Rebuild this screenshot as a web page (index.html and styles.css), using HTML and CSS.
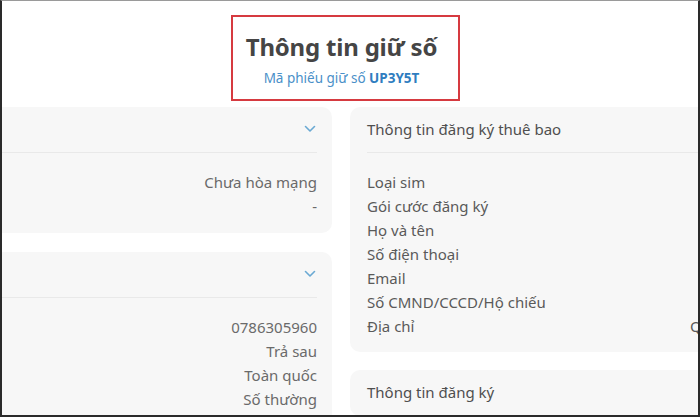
FILE: index.html
```html
<!DOCTYPE html>
<html lang="vi">
<head>
<meta charset="utf-8">
<title>Thông tin giữ số</title>
<link rel="stylesheet" href="styles.css">
</head>
<body>
<div class="frame">
  <header class="head">
    <div class="head-box">
      <h1 class="title">Thông tin giữ số</h1>
      <p class="code">Mã phiếu giữ số <strong>UP3Y5T</strong></p>
    </div>
  </header>
  <div class="columns">
    <div class="col">
      <section class="card">
        <div class="card-head">
          <span class="card-title"></span>
          <svg class="chev" viewBox="0 0 12 8" width="12" height="8"><path d="M1.5 1.5 L6 6 L10.5 1.5" fill="none" stroke="#6aa9d3" stroke-width="1.6" stroke-linecap="round" stroke-linejoin="round"/></svg>
        </div>
        <div class="card-body values">
          <div>Chưa hòa mạng</div>
          <div>-</div>
        </div>
      </section>
      <section class="card">
        <div class="card-head">
          <span class="card-title"></span>
          <svg class="chev" viewBox="0 0 12 8" width="12" height="8"><path d="M1.5 1.5 L6 6 L10.5 1.5" fill="none" stroke="#6aa9d3" stroke-width="1.6" stroke-linecap="round" stroke-linejoin="round"/></svg>
        </div>
        <div class="card-body values">
          <div>0786305960</div>
          <div>Trả sau</div>
          <div>Toàn quốc</div>
          <div>Số thường</div>
        </div>
      </section>
    </div>
    <div class="col">
      <section class="card">
        <div class="card-head">
          <span class="card-title">Thông tin đăng ký thuê bao</span>
        </div>
        <div class="card-body rows">
          <div class="row"><span>Loại sim</span><span class="val"></span></div>
          <div class="row"><span>Gói cước đăng ký</span><span class="val"></span></div>
          <div class="row"><span>Họ và tên</span><span class="val"></span></div>
          <div class="row"><span>Số điện thoại</span><span class="val"></span></div>
          <div class="row"><span>Email</span><span class="val"></span></div>
          <div class="row"><span>Số CMND/CCCD/Hộ chiếu</span><span class="val"></span></div>
          <div class="row"><span>Địa chỉ</span><span class="val">Quận 1, TP. Hồ Chí Minh</span></div>
        </div>
      </section>
      <section class="card">
        <div class="card-head">
          <span class="card-title">Thông tin đăng ký</span>
        </div>
      </section>
    </div>
  </div>
</div>
</body>
</html>
```

FILE: styles.css
```css
html, body {
  margin: 0;
  padding: 0;
  background: #ffffff;
}
body {
  font-family: "Noto Sans", "Open Sans", sans-serif;
  color: #555555;
}
.frame {
  width: 700px;
  height: 417px;
  box-sizing: border-box;
  border-top: 1px solid #9a9a9a;
  border-left: 2px solid #2a2a2a;
  border-right: 2px solid #2a2a2a;
  border-bottom: 2px solid #2a2a2a;
  overflow: hidden;
  background: #ffffff;
}
.head {
  display: flex;
  justify-content: center;
  padding-top: 14px;
  padding-right: 9px;
  height: 92px;
  box-sizing: border-box;
}
.head-box {
  width: 229px;
  height: 86px;
  box-sizing: border-box;
  border: 2px solid #d63a40;
  padding-right: 8px;
  display: flex;
  flex-direction: column;
  align-items: center;
}
.title {
  margin: 15px 0 0;
  font-size: 24px;
  line-height: 30px;
  font-weight: 700;
  color: #454545;
  letter-spacing: -0.2px;
}
.code {
  margin: 7px 0 0;
  font-size: 13.5px;
  line-height: 18px;
  color: #4a90c8;
}
.code strong {
  color: #2f7dc0;
  font-weight: 700;
}
.columns {
  display: grid;
  grid-template-columns: 350px 420px;
  column-gap: 18px;
  margin-left: -20px;
  margin-top: 14px;
}
.col {
  display: flex;
  flex-direction: column;
  gap: 19px;
}
.col + .col {
  gap: 18px;
}
.card {
  background: #f7f7f7;
  border-radius: 10px;
}
.card-head {
  height: 45px;
  margin: 0 15px 0 17px;
  border-bottom: 1px solid #e9e9e9;
  display: flex;
  align-items: center;
  justify-content: space-between;
}
.card-title {
  font-size: 15px;
  color: #4f4f4f;
  margin-top: -1px;
}
.chev {
  margin-right: 1px;
  margin-top: -2px;
}
.card-body {
  padding: 17px 15px 15px 17px;
  font-size: 15px;
  line-height: 24px;
}
.values {
  text-align: right;
  color: #6a6a6a;
}
.rows .row {
  display: grid;
  grid-template-columns: 323px 1fr;
  color: #5a5a5a;
}
.rows .val {
  white-space: nowrap;
}
.col + .col .card:first-child .card-body {
  padding-bottom: 14px;
}
```
